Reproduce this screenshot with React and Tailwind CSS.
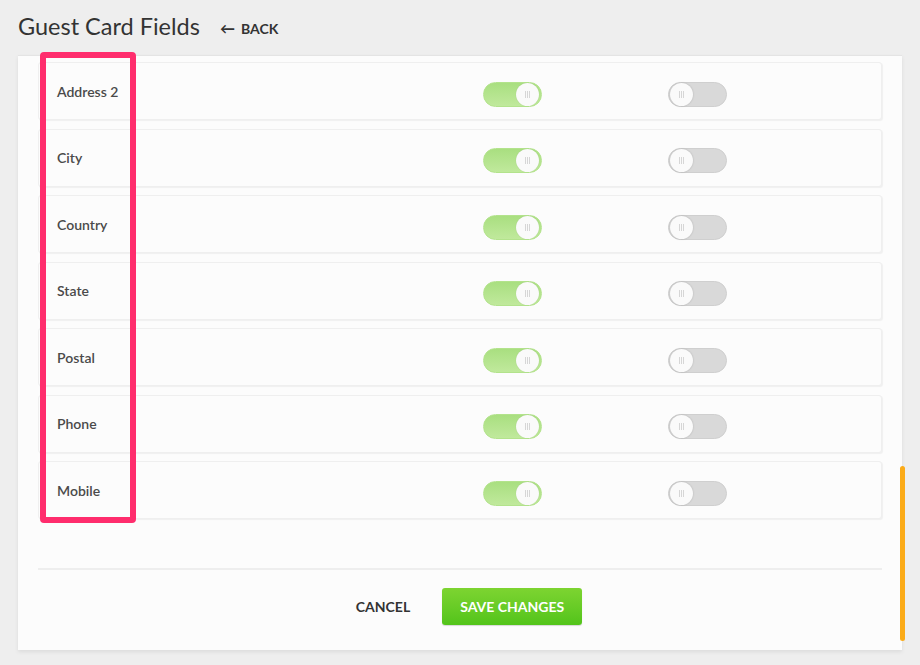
import React from "react";

const rows = ["Address 2", "City", "Country", "State", "Postal", "Phone", "Mobile"];

function Grip() {
  return (
    <div className="flex gap-[1px]">
      <span className="block w-[1px] h-[7px] bg-[#d6d6d6]" />
      <span className="block w-[1px] h-[7px] bg-[#d6d6d6]" />
      <span className="block w-[1px] h-[7px] bg-[#d6d6d6]" />
    </div>
  );
}

function Toggle({ on }) {
  return on ? (
    <div className="mt-[6px] w-[59px] h-[25px] rounded-full bg-gradient-to-b from-[#a9df80] to-[#c0e99c] border border-[#b3e38c] flex items-center justify-end pr-[2px]">
      <div className="w-[23px] h-[23px] rounded-full bg-[#fafafa] flex items-center justify-center shadow-[0_0_1px_rgba(0,0,0,0.15)]">
        <Grip />
      </div>
    </div>
  ) : (
    <div className="mt-[6px] w-[59px] h-[25px] rounded-full bg-[#d9d9d9] border border-[#cfcfcf] flex items-center justify-start pl-[1px]">
      <div className="w-[23px] h-[23px] rounded-full bg-[#fafafa] flex items-center justify-center shadow-[0_0_2px_rgba(0,0,0,0.2)]">
        <Grip />
      </div>
    </div>
  );
}

export default function App() {
  return (
    <div className="relative w-[920px] h-[665px] overflow-hidden bg-[#eeeeee]" style={{ fontFamily: "Lato, 'Noto Sans', sans-serif" }}>
      <div className="h-[55px] flex items-center pl-[18px] pb-[1px]">
        <h1 className="text-[23.5px] leading-none text-[#333333] font-normal">Guest Card Fields</h1>
        <div className="ml-[20px] flex items-center gap-[6px] text-[14px] font-bold text-[#333333] mt-[2px]">
          <span className="text-[15px] leading-none">&#8592;</span>
          <span>BACK</span>
        </div>
      </div>
      <div className="ml-[18px] w-[884px] h-[595px] bg-[#fcfcfc] border-t border-[#e4e4e4] shadow-[0_2px_4px_rgba(0,0,0,0.08)] flex flex-col">
        <div className="pt-[6px] px-[20px] flex flex-col gap-[8.5px]">
          {rows.map((r) => (
            <div key={r} className="h-[58px] bg-[#fcfcfc] border border-[#efefef] rounded-[3px] shadow-[1px_1px_1px_rgba(0,0,0,0.05)] flex items-center pl-[18px]">
              <div className="w-[426px] text-[14px] font-semibold text-[#4a4a4a]">{r}</div>
              <Toggle on />
              <div className="w-[126px]" />
              <Toggle on={false} />
            </div>
          ))}
        </div>
        <div className="mx-[20px] mt-[49px] border-t-2 border-[#eeeeee]" />
        <div className="flex items-center justify-center gap-[16px] pt-[18px] pl-[2px]">
          <button className="px-[16px] h-[37px] text-[14px] font-bold text-[#333333]">CANCEL</button>
          <button className="w-[140px] h-[37px] rounded-[3px] bg-gradient-to-b from-[#7dd431] to-[#52c41a] text-white text-[14px] font-bold shadow-[0_1px_1px_rgba(0,0,0,0.15)]">SAVE CHANGES</button>
        </div>
      </div>
      <div className="absolute left-[40px] top-[52px] w-[96px] h-[471px] border-[6px] border-[#ff2d6d] rounded-[4px]" />
      <div className="absolute left-[900px] top-[466px] w-[5px] h-[175px] rounded-full bg-[#fbab18]" />
    </div>
  );
}
